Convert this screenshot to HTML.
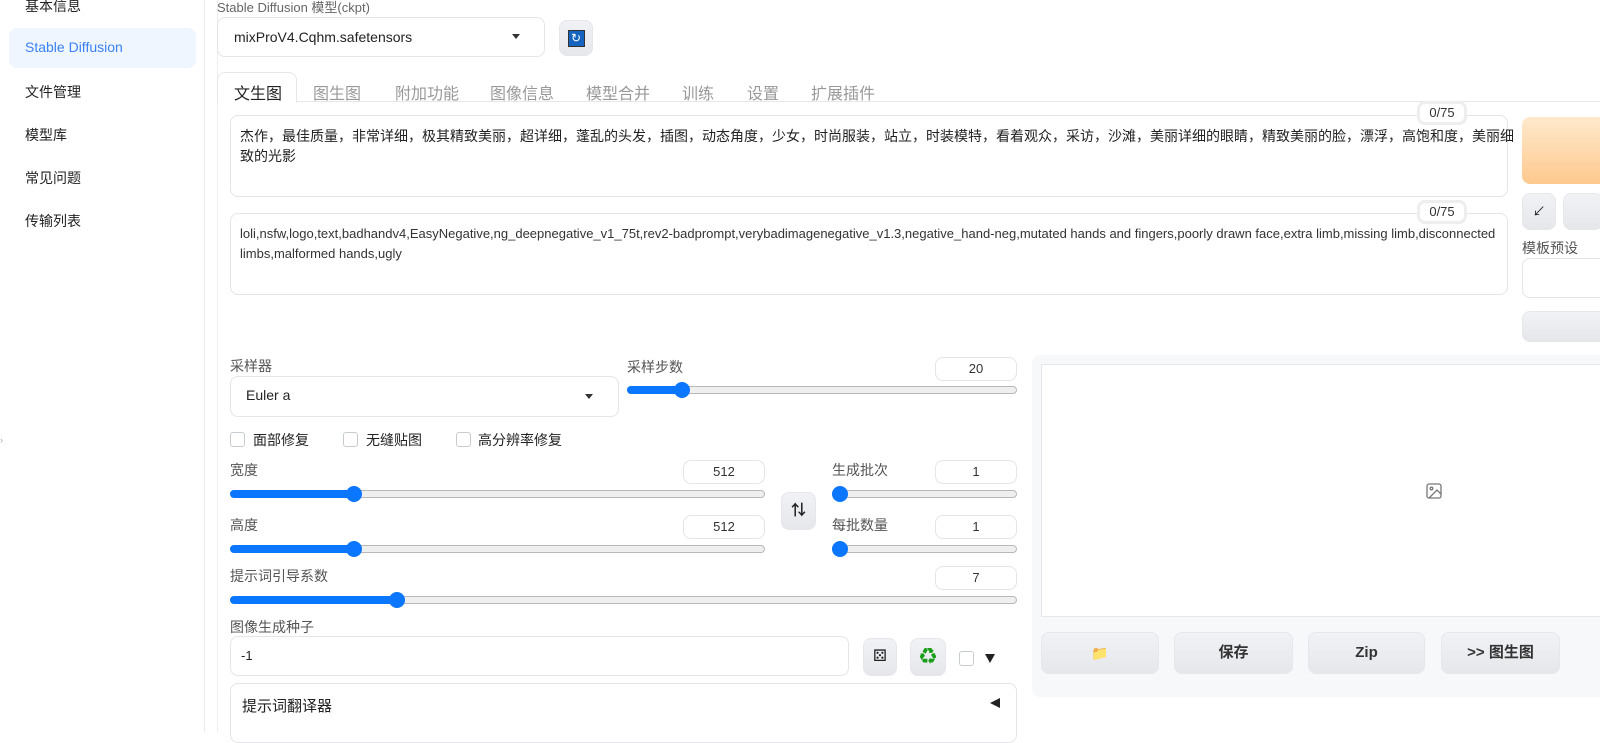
<!DOCTYPE html><html><head><meta charset="utf-8"><style>
*{box-sizing:border-box;margin:0;padding:0}
body{width:1600px;height:732px;overflow:hidden;background:#fff;font-family:"Liberation Sans","Noto Sans CJK SC",sans-serif;color:#222;position:relative;font-size:14px}
.a{position:absolute}
.box{position:absolute;border:1px solid #e3e5e8;border-radius:8px;background:#fff}
.lbl{position:absolute;font-size:14px;color:#555}
.num{position:absolute;border:1px solid #e3e5e8;border-radius:8px;background:#fff;text-align:center;font-size:13px;line-height:22px;height:24px;color:#333}
.tr{position:absolute;height:8px;border:1px solid #b8b8b8;border-radius:4px;background:#efefef}
.fill{position:absolute;height:8px;border-radius:4px;background:#0b76ff}
.th{position:absolute;width:16px;height:16px;border-radius:50%;background:#0b76ff}
.btn{position:absolute;background:linear-gradient(#f1f2f5,#e5e7eb);border:1px solid #e5e7eb;border-radius:8px;text-align:center}
.cb{position:absolute;width:15px;height:15px;border:1px solid #c8cbd0;border-radius:3px;background:#fff}
.tab{position:absolute;top:80px;font-size:16px;color:#999}
</style></head><body>
<div class="a" style="left:204px;top:0;width:1px;height:732px;background:#e8e8e8"></div>
<div class="a" style="left:25px;top:-4px;font-size:14px">基本信息</div>
<div class="a" style="left:9px;top:28px;width:187px;height:40px;background:#eff6ff;border-radius:8px"></div>
<div class="a" style="left:25px;top:39px;color:#3b82f6;font-size:14px">Stable Diffusion</div>
<div class="a" style="left:25px;top:82px">文件管理</div>
<div class="a" style="left:25px;top:125px">模型库</div>
<div class="a" style="left:25px;top:168px">常见问题</div>
<div class="a" style="left:25px;top:211px">传输列表</div>
<div class="a" style="left:0;top:435px;color:#aaa;font-size:9px">›</div>
<div class="a" style="left:217px;top:0;width:1px;height:732px;background:#eee"></div>
<div class="lbl" style="left:217px;top:-3px;font-size:13px;color:#666">Stable Diffusion 模型(ckpt)</div>
<div class="box" style="left:217px;top:17px;width:328px;height:40px"></div>
<div class="a" style="left:234px;top:29px;font-size:14px">mixProV4.Cqhm.safetensors</div>
<div class="a" style="left:512px;top:34px;border-left:4px solid transparent;border-right:4px solid transparent;border-top:5px solid #333"></div>
<div class="btn" style="left:559px;top:20px;width:34px;height:36px"><div style="margin:9px auto;width:17px;height:17px;background:#1565c0;border:1px solid #333;color:#fff;font-size:12px;line-height:15px">↻</div></div>
<div class="a" style="left:217px;top:101px;width:1400px;height:1px;background:#e5e7eb"></div>
<div class="a" style="left:217px;top:72px;width:80px;height:31px;border:1px solid #e5e7eb;border-bottom:1px solid #fff;border-radius:8px 8px 0 0;background:#fff"></div>
<div class="tab" style="left:234px;color:#222">文生图</div>
<div class="tab" style="left:313px">图生图</div>
<div class="tab" style="left:395px">附加功能</div>
<div class="tab" style="left:490px">图像信息</div>
<div class="tab" style="left:586px">模型合并</div>
<div class="tab" style="left:682px">训练</div>
<div class="tab" style="left:747px">设置</div>
<div class="tab" style="left:811px">扩展插件</div>
<div class="box" style="left:230px;top:115px;width:1278px;height:82px"></div>
<div class="a" style="left:240px;top:126px;width:1275px;font-size:14px;line-height:20px">杰作，最佳质量，非常详细，极其精致美丽，超详细，蓬乱的头发，插图，动态角度，少女，时尚服装，站立，时装模特，看着观众，采访，沙滩，美丽详细的眼睛，精致美丽的脸，漂浮，高饱和度，美丽细致的光影</div>
<div class="num" style="left:1417px;top:101px;width:50px;border:3px solid #eee;line-height:18px">0/75</div>
<div class="box" style="left:230px;top:213px;width:1278px;height:82px"></div>
<div class="a" style="left:240px;top:224px;width:1262px;font-size:13px;line-height:20px;color:#333">loli,nsfw,logo,text,badhandv4,EasyNegative,ng_deepnegative_v1_75t,rev2-badprompt,verybadimagenegative_v1.3,negative_hand-neg,mutated hands and fingers,poorly drawn face,extra limb,missing limb,disconnected limbs,malformed hands,ugly</div>
<div class="num" style="left:1417px;top:200px;width:50px;border:3px solid #eee;line-height:18px">0/75</div>
<div class="a" style="left:1522px;top:117px;width:90px;height:67px;border-radius:8px;background:linear-gradient(#ffe9cc,#fdc98e)"></div>
<div class="btn" style="left:1522px;top:193px;width:34px;height:37px;line-height:35px;font-size:13px">↙</div>
<div class="btn" style="left:1563px;top:193px;width:40px;height:37px"></div>
<div class="lbl" style="left:1522px;top:238px">模板预设</div>
<div class="box" style="left:1522px;top:258px;width:90px;height:40px"></div>
<div class="btn" style="left:1522px;top:311px;width:90px;height:31px"></div>

<div class="lbl" style="left:230px;top:356px">采样器</div>
<div class="box" style="left:230px;top:376px;width:389px;height:41px"></div>
<div class="a" style="left:246px;top:387px;font-size:14px">Euler a</div>
<div class="a" style="left:585px;top:394px;border-left:4px solid transparent;border-right:4px solid transparent;border-top:5px solid #333"></div>
<div class="lbl" style="left:627px;top:357px">采样步数</div>
<div class="num" style="left:935px;top:357px;width:82px">20</div>
<div class="tr" style="left:627px;top:386px;width:390px"></div><div class="fill" style="left:627px;top:386px;width:55px"></div><div class="th" style="left:674px;top:382px"></div>
<div class="cb" style="left:230px;top:432px"></div><div class="a" style="left:253px;top:430px">面部修复</div>
<div class="cb" style="left:343px;top:432px"></div><div class="a" style="left:366px;top:430px">无缝贴图</div>
<div class="cb" style="left:456px;top:432px"></div><div class="a" style="left:478px;top:430px">高分辨率修复</div>
<div class="lbl" style="left:230px;top:460px">宽度</div>
<div class="num" style="left:683px;top:460px;width:82px">512</div>
<div class="tr" style="left:230px;top:490px;width:535px"></div><div class="fill" style="left:230px;top:490px;width:125px"></div><div class="th" style="left:346px;top:486px"></div>
<div class="lbl" style="left:230px;top:515px">高度</div>
<div class="num" style="left:683px;top:515px;width:82px">512</div>
<div class="tr" style="left:230px;top:545px;width:535px"></div><div class="fill" style="left:230px;top:545px;width:125px"></div><div class="th" style="left:346px;top:541px"></div>
<div class="btn" style="left:781px;top:492px;width:35px;height:38px;line-height:36px;font-size:15px;font-weight:bold">⇅</div>
<div class="lbl" style="left:832px;top:460px">生成批次</div>
<div class="num" style="left:935px;top:460px;width:82px">1</div>
<div class="tr" style="left:832px;top:490px;width:185px"></div><div class="th" style="left:832px;top:486px"></div>
<div class="lbl" style="left:832px;top:515px">每批数量</div>
<div class="num" style="left:935px;top:515px;width:82px">1</div>
<div class="tr" style="left:832px;top:545px;width:185px"></div><div class="th" style="left:832px;top:541px"></div>
<div class="lbl" style="left:230px;top:566px">提示词引导系数</div>
<div class="num" style="left:935px;top:566px;width:82px">7</div>
<div class="tr" style="left:230px;top:596px;width:787px"></div><div class="fill" style="left:230px;top:596px;width:168px"></div><div class="th" style="left:389px;top:592px"></div>
<div class="lbl" style="left:230px;top:617px">图像生成种子</div>
<div class="box" style="left:230px;top:636px;width:619px;height:40px"></div>
<div class="a" style="left:241px;top:648px;font-size:13px">-1</div>
<div class="btn" style="left:863px;top:638px;width:34px;height:38px;line-height:36px;font-size:16px">⚄</div>
<div class="btn" style="left:910px;top:638px;width:36px;height:38px;line-height:36px;font-size:17px;color:#1a9e1a">♻</div>
<div class="cb" style="left:959px;top:651px"></div>
<div class="a" style="left:985px;top:654px;border-left:5px solid transparent;border-right:5px solid transparent;border-top:9px solid #222"></div>
<div class="box" style="left:230px;top:683px;width:787px;height:60px"></div>
<div class="a" style="left:242px;top:695px;font-size:15px">提示词翻译器</div>
<div class="a" style="left:990px;top:698px;border-top:5px solid transparent;border-bottom:5px solid transparent;border-right:10px solid #222"></div>

<div class="a" style="left:1032px;top:355px;width:600px;height:342px;background:#f7f8fa;border-radius:8px"></div>
<div class="a" style="left:1041px;top:364px;width:600px;height:253px;background:#fff;border:1px solid #e5e7eb"></div>
<svg class="a" style="left:1425px;top:482px" width="18" height="18" viewBox="0 0 18 18" fill="none" stroke="#777" stroke-width="1.3"><rect x="2" y="2" width="14" height="14" rx="2"/><circle cx="6.5" cy="6.5" r="1.3"/><path d="M16 12l-4-4-8 8"/></svg>
<div class="btn" style="left:1041px;top:632px;width:118px;height:42px;line-height:40px;font-size:14px">📁</div>
<div class="btn" style="left:1174px;top:632px;width:119px;height:42px;line-height:40px;font-size:15px;font-weight:bold;color:#333">保存</div>
<div class="btn" style="left:1308px;top:632px;width:117px;height:42px;line-height:40px;font-size:15px;font-weight:bold;color:#333">Zip</div>
<div class="btn" style="left:1441px;top:632px;width:119px;height:42px;line-height:40px;font-size:15px;font-weight:bold;color:#333">&gt;&gt; 图生图</div>
</body></html>
